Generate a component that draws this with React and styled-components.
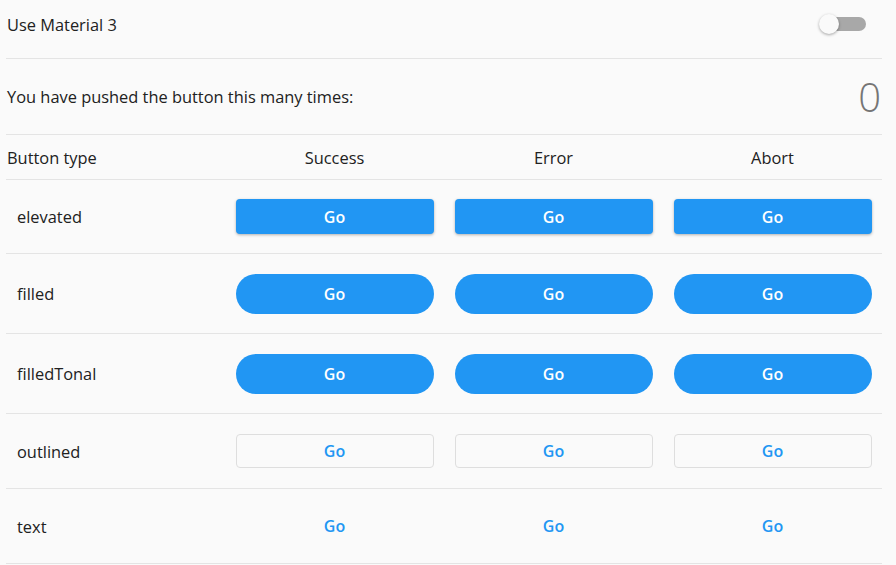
import styled, { createGlobalStyle } from "styled-components";

const GlobalStyle = createGlobalStyle`
  *, *::before, *::after { box-sizing: border-box; }
  html, body {
    margin: 0;
    padding: 0;
    background: #fafafa;
    font-family: "Open Sans", "Noto Sans", sans-serif;
    color: #212121;
  }
`;

const Page = styled.div`
  width: 876px;
  margin-left: 6px;
  height: 565px;
  overflow: hidden;
`;

const SettingRow = styled.div`
  display: flex;
  align-items: center;
  justify-content: space-between;
  height: ${(p) => p.h}px;
  padding-bottom: ${(p) => p.pb || 0}px;
  border-bottom: 1px solid #e4e4e4;
  padding-left: 1px;
  font-size: 16.4px;
`;

const Switch = styled.div`
  position: relative;
  width: 36px;
  height: 14px;
  margin-right: 16px;
  border-radius: 7px;
  background: #a8a8a8;
`;

const Thumb = styled.div`
  position: absolute;
  left: -11px;
  top: -3px;
  width: 20px;
  height: 20px;
  border-radius: 50%;
  background: #fafafa;
  box-shadow: 0 1px 3px rgba(0, 0, 0, 0.35);
`;

const Counter = styled.div`
  font-size: 40px;
  color: #757575;
  font-weight: 300;
  margin-right: 1px;
`;

const Grid = styled.div`
  display: grid;
  grid-template-columns: repeat(4, 219px);
`;

const Cell = styled.div`
  display: flex;
  align-items: center;
  justify-content: ${(p) => (p.left ? "flex-start" : "center")};
  padding-left: ${(p) => (p.left ? p.pad : 0)}px;
  height: ${(p) => p.h}px;
  border-bottom: 1px solid #e4e4e4;
  font-size: 16.4px;
`;

const Go = styled.button`
  width: 198px;
  height: ${(p) => p.h}px;
  font-family: inherit;
  font-size: 16px;
  font-weight: 600;
  cursor: pointer;
  border: ${(p) => (p.kind === "outlined" ? "1px solid #dedede" : "none")};
  background: ${(p) =>
    p.kind === "outlined" || p.kind === "text" ? "transparent" : "#2196f3"};
  color: ${(p) =>
    p.kind === "outlined" || p.kind === "text" ? "#2196f3" : "#ffffff"};
  border-radius: ${(p) =>
    p.kind === "filled" || p.kind === "filledTonal" ? "20px" : "4px"};
  box-shadow: ${(p) =>
    p.kind === "elevated" ? "0 1px 3px rgba(0,0,0,0.3)" : "none"};
`;

const rows = [
  { kind: "elevated", h: 74, bh: 35 },
  { kind: "filled", h: 80, bh: 40 },
  { kind: "filledTonal", h: 80, bh: 40 },
  { kind: "outlined", h: 75, bh: 34 },
  { kind: "text", h: 75, bh: 36 },
];

export default function App() {
  return (
    <Page>
      <GlobalStyle />
      <SettingRow h={59} pb={10}>
        <span>Use Material 3</span>
        <Switch>
          <Thumb />
        </Switch>
      </SettingRow>
      <SettingRow h={76}>
        <span>You have pushed the button this many times:</span>
        <Counter>0</Counter>
      </SettingRow>
      <Grid>
        <Cell left pad={1} h={45}>Button type</Cell>
        <Cell h={45}>Success</Cell>
        <Cell h={45}>Error</Cell>
        <Cell h={45}>Abort</Cell>
        {rows.map((r) => [
          <Cell key={r.kind} left pad={11} h={r.h}>
            {r.kind}
          </Cell>,
          ["s", "e", "a"].map((c) => (
            <Cell key={r.kind + c} h={r.h}>
              <Go kind={r.kind} h={r.bh}>
                Go
              </Go>
            </Cell>
          )),
        ])}
      </Grid>
    </Page>
  );
}
